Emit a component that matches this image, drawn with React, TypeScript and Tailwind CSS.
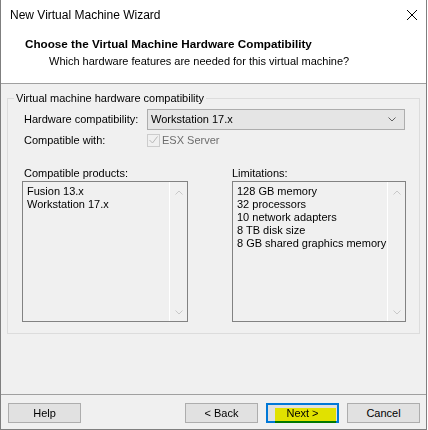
import React from 'react';

const Chevron: React.FC<{ up?: boolean; className?: string }> = ({ up, className }) => (
  <svg width="8" height="5" viewBox="0 0 8 5" className={className}>
    <path
      d={up ? 'M0.5 4.5 L4 1 L7.5 4.5' : 'M0.5 0.5 L4 4 L7.5 0.5'}
      fill="none"
      stroke="currentColor"
      strokeWidth="1"
    />
  </svg>
);

const ListBox: React.FC<{ items: string[]; className?: string }> = ({ items, className }) => (
  <div className={`flex h-[141px] border border-[#828282] bg-[#f0f0f0] ${className}`}>
    <div className="flex-1 pl-[4px] pt-[3px] text-[11px] leading-[13px] text-black">
      {items.map(item => (
        <div key={item}>{item}</div>
      ))}
    </div>
    <div className="flex w-[18px] flex-col items-center justify-between border-l border-white pt-[8px] pb-[6px] text-[#c8c8c8]">
      <Chevron up />
      <Chevron />
    </div>
  </div>
);

const Button: React.FC<{ label: string; isDefault?: boolean; highlight?: boolean }> = ({ label, isDefault, highlight }) => (
  <button
    className={`relative flex h-[20px] w-[73px] items-center justify-center bg-[#e1e1e1] text-[11px] text-black ${
      isDefault ? 'border-2 border-[#0078d7]' : 'border border-[#adadad]'
    }`}
  >
    {label}
    {highlight && (
      <span className="pointer-events-none absolute left-[7px] top-[3px] h-[15px] w-[61px] bg-[#ffff00] mix-blend-multiply" />
    )}
  </button>
);

export default function App() {
  return (
    <div className="flex h-[430px] w-[427px] flex-col border-x border-b border-[#7f7f7f] bg-white font-['Liberation_Sans',Arial,sans-serif] text-black">
      {/* title bar */}
      <div className="flex h-[30px] shrink-0 items-center justify-between pl-[9px] pr-[8px]">
        <span className="text-[12px]">New Virtual Machine Wizard</span>
        <svg width="10" height="10" viewBox="0 0 10 10" className="mr-[1px]">
          <path d="M0 0 L10 10 M10 0 L0 10" stroke="#000" strokeWidth="1" />
        </svg>
      </div>

      {/* header */}
      <div className="h-[54px] shrink-0 border-b border-[#a0a0a0] pt-[6px]">
        <div className="pl-[24px] text-[11.7px] font-bold leading-[16px]">
          Choose the Virtual Machine Hardware Compatibility
        </div>
        <div className="mt-[1px] pl-[48px] text-[11px] leading-[16px]">
          Which hardware features are needed for this virtual machine?
        </div>
      </div>

      {/* body */}
      <div className="flex flex-1 flex-col bg-[#f0f0f0] text-[11px]">
        <div className="relative mx-[6px] mt-[14px] h-[236px] border border-[#dcdcdc] pl-[14px] pt-[10px]">
          <span className="absolute -top-[7px] left-[6px] bg-[#f0f0f0] px-[2px] leading-[13px]">
            Virtual machine hardware compatibility
          </span>

          <div className="flex h-[21px] items-center">
            <span className="w-[125px] pl-[2px]">Hardware compatibility:</span>
            <div className="flex h-[21px] w-[258px] items-center justify-between border border-[#adadad] bg-[#e5e5e5] pl-[3px] pr-[8px]">
              <span>Workstation 17.x</span>
              <Chevron className="text-[#606060]" />
            </div>
          </div>

          <div className="mt-[2px] flex h-[16px] items-center">
            <span className="w-[125px] pl-[2px]">Compatible with:</span>
            <span className="flex h-[13px] w-[13px] items-center justify-center border border-[#cccccc] bg-[#f0f0f0]">
              <svg width="9" height="8" viewBox="0 0 9 8">
                <path d="M0.5 4 L3.5 7 L8.5 0.5" fill="none" stroke="#b8b8b8" strokeWidth="1" />
              </svg>
            </span>
            <span className="ml-[2px] text-[#6d6d6d]">ESX Server</span>
          </div>

          <div className="mt-[17px] flex gap-[44px]">
            <div className="w-[166px]">
              <div className="h-[16px] pl-[2px] leading-[16px]">Compatible products:</div>
              <ListBox items={['Fusion 13.x', 'Workstation 17.x']} />
            </div>
            <div className="w-[174px]">
              <div className="h-[16px] leading-[16px]">Limitations:</div>
              <ListBox
                items={['128 GB memory', '32 processors', '10 network adapters', '8 TB disk size', '8 GB shared graphics memory']}
              />
            </div>
          </div>
        </div>

        <div className="flex-1" />

        <div className="flex h-[35px] shrink-0 items-start justify-between border-t border-[#a0a0a0] pl-[7px] pr-[6px] pt-[8px]">
          <Button label="Help" />
          <div className="flex gap-[8px]">
            <Button label="< Back" />
            <Button label="Next >" isDefault highlight />
            <Button label="Cancel" />
          </div>
        </div>
      </div>
    </div>
  );
}
